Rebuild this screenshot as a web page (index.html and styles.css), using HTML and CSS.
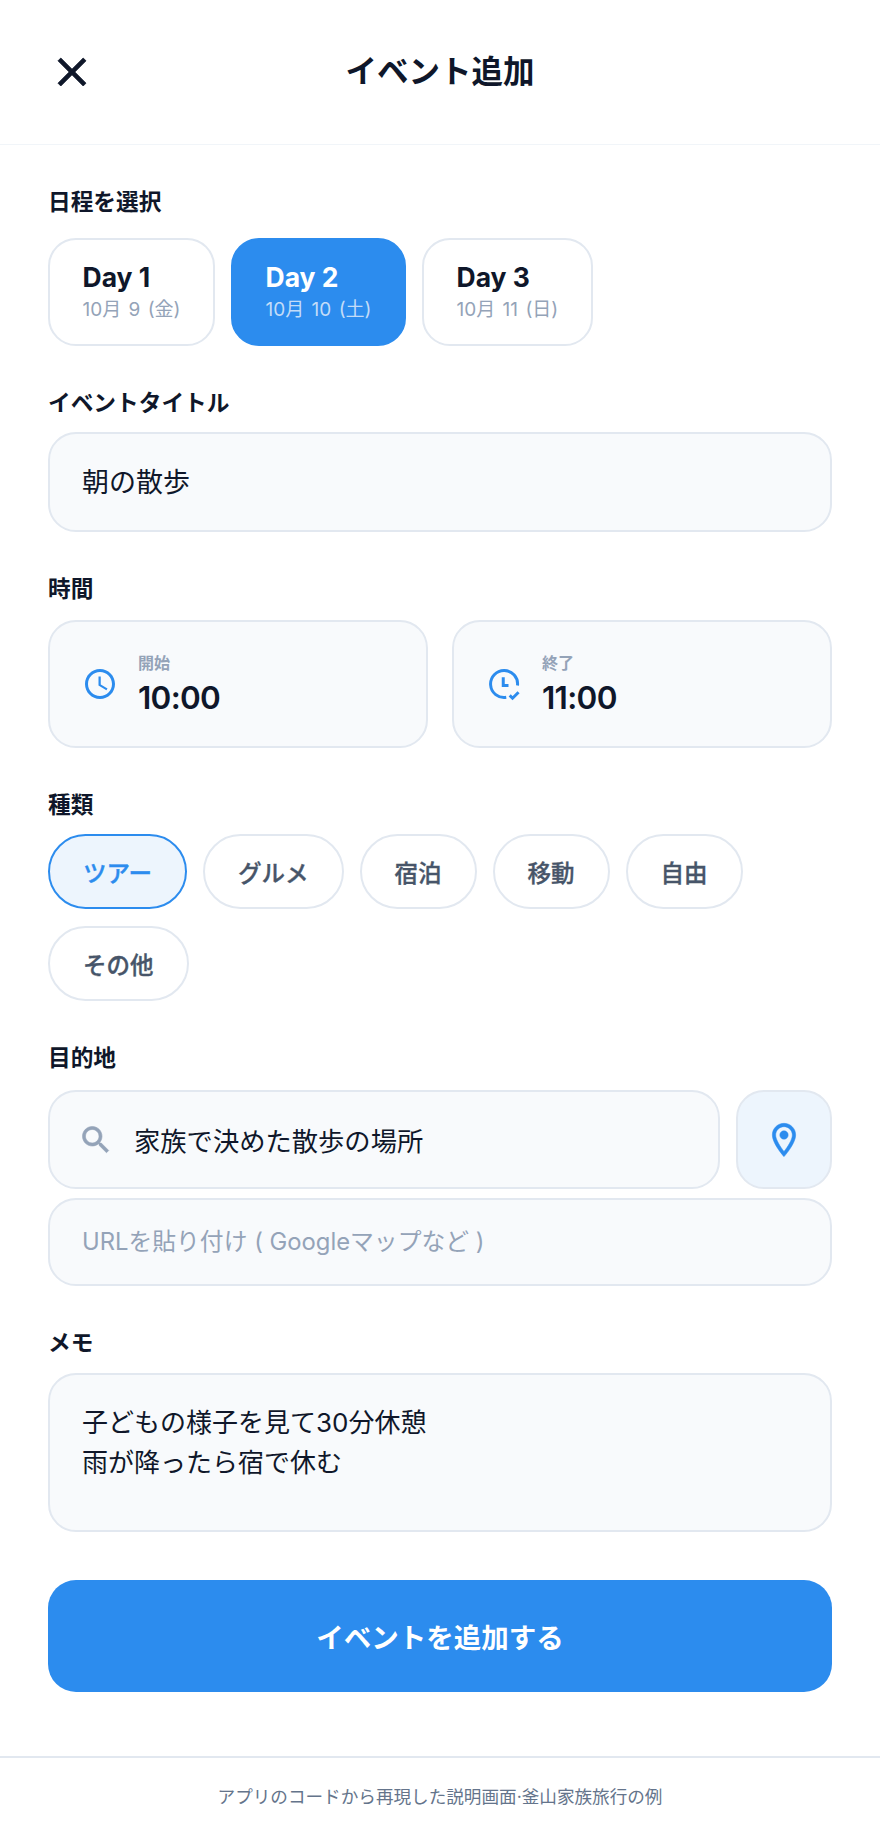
FILE: index.html
```html
<!DOCTYPE html>
<html lang="ja">
<head>
    <meta charset="UTF-8">
    <meta name="viewport" content="width=device-width, initial-scale=1.0">
    <title>イベント追加</title>
    <link rel="stylesheet" href="styles.css">
</head>
<body>
    <header class="top-bar">
        <button class="close-btn" aria-label="閉じる">
            <svg viewBox="0 0 24 24"><path d="M19 6.41 17.59 5 12 10.59 6.41 5 5 6.41 10.59 12 5 17.59 6.41 19 12 13.41 17.59 19 19 17.59 13.41 12z"/></svg>
        </button>
        <h1>イベント追加</h1>
    </header>

    <main class="form">
        <section class="field day-field">
            <div class="field-label">日程を選択</div>
            <div class="day-row">
                <button class="day-card">
                    <span class="day-name">Day 1</span>
                    <span class="day-date">10月 9 (金)</span>
                </button>
                <button class="day-card active">
                    <span class="day-name">Day 2</span>
                    <span class="day-date">10月 10 (土)</span>
                </button>
                <button class="day-card">
                    <span class="day-name">Day 3</span>
                    <span class="day-date">10月 11 (日)</span>
                </button>
            </div>
        </section>

        <section class="field title-field">
            <div class="field-label">イベントタイトル</div>
            <input class="text-input title-input" type="text" value="朝の散歩">
        </section>

        <section class="field time-field">
            <div class="field-label">時間</div>
            <div class="time-row">
                <div class="time-card">
                    <svg class="icon" viewBox="0 0 24 24"><path d="M11.99 2C6.47 2 2 6.48 2 12s4.47 10 9.99 10C17.52 22 22 17.52 22 12S17.52 2 11.99 2zM12 20c-4.42 0-8-3.58-8-8s3.58-8 8-8 8 3.58 8 8-3.58 8-8 8z"/><path d="M12.5 7H11v6l5.25 3.15.75-1.23-4.5-2.67z"/></svg>
                    <div>
                        <div class="time-label">開始</div>
                        <div class="time-value">10:00</div>
                    </div>
                </div>
                <div class="time-card">
                    <svg class="icon icon-line" viewBox="0 0 24 24"><path d="M21 13A9 9 0 1 0 13.5 20.9"/><path d="M11.5 7.5V13H15"/><path d="M15.8 19.6l1.9 1.9 4-4"/></svg>
                    <div>
                        <div class="time-label">終了</div>
                        <div class="time-value">11:00</div>
                    </div>
                </div>
            </div>
        </section>

        <section class="field type-field">
            <div class="field-label">種類</div>
            <div class="chip-row">
                <button class="chip active">ツアー</button>
                <button class="chip">グルメ</button>
                <button class="chip">宿泊</button>
                <button class="chip">移動</button>
                <button class="chip">自由</button>
                <button class="chip">その他</button>
            </div>
        </section>

        <section class="field place-field">
            <div class="field-label">目的地</div>
            <div class="place-row">
                <div class="search-box">
                    <svg class="icon icon-gray" viewBox="0 0 24 24"><path d="M15.5 14h-.79l-.28-.27C15.41 12.59 16 11.11 16 9.5 16 5.91 13.09 3 9.5 3S3 5.91 3 9.5 5.91 16 9.5 16c1.61 0 3.09-.59 4.23-1.57l.27.28v.79l5 4.99L20.49 19l-4.99-5zm-6 0C7.01 14 5 11.99 5 9.5S7.01 5 9.5 5 14 7.01 14 9.5 11.99 14 9.5 14z"/></svg>
                    <input type="text" value="家族で決めた散歩の場所">
                </div>
                <button class="pin-btn" aria-label="地図">
                    <svg class="icon icon-pin" viewBox="0 0 24 24"><path d="M12 2C8.13 2 5 5.13 5 9c0 5.25 7 13 7 13s7-7.75 7-13c0-3.87-3.13-7-7-7zm0 2c2.76 0 5 2.24 5 5 0 2.88-2.88 7.19-5 9.88C9.92 16.21 7 11.85 7 9c0-2.76 2.24-5 5-5z"/><circle cx="12" cy="9" r="2.5"/></svg>
                </button>
            </div>
            <input class="text-input url-input" type="text" placeholder="URLを貼り付け ( Googleマップなど )">
        </section>

        <section class="field">
            <div class="field-label">メモ</div>
            <textarea class="text-input memo-input">子どもの様子を見て30分休憩
雨が降ったら宿で休む</textarea>
        </section>

        <button class="submit-btn">イベントを追加する</button>
    </main>

    <footer class="note">アプリのコードから再現した説明画面·釜山家族旅行の例</footer>
</body>
</html>
```
FILE: styles.css
```css
* {
    box-sizing: border-box;
}
body {
    margin: 0;
    background-color: white;
    color: #0f172a;
    font-family: Inter, "Noto Sans CJK JP", sans-serif;
}
button, input, textarea {
    font-family: inherit;
    color: inherit;
}
.top-bar {
    display: flex;
    align-items: center;
    height: 145px;
    padding: 0 48px;
    border-bottom: 1px solid #f1f5f9;
}
.top-bar h1 {
    flex: 1;
    margin: 0 48px 6px 0;
    font-size: 31.5px;
    font-weight: 700;
    text-align: center;
}
.close-btn {
    width: 48px;
    height: 48px;
    padding: 0;
    border: none;
    background: none;
}
.close-btn svg {
    display: block;
    width: 48px;
    height: 48px;
    fill: #0f172a;
    stroke: #0f172a;
    stroke-width: 0.4;
}
.form {
    padding: 42px 48px 0;
}
.field {
    margin-bottom: 42px;
}
.field-label {
    height: 30px;
    margin-bottom: 15px;
    font-size: 22.7px;
    line-height: 30px;
    font-weight: 700;
}
.day-field .field-label {
    margin-bottom: 21px;
}
.title-field .field-label {
    margin-bottom: 14px;
}
.time-field .field-label {
    margin-bottom: 16px;
}
.type-field .field-label {
    margin-bottom: 14px;
}
.place-field .field-label {
    margin-bottom: 17px;
}
.icon {
    display: block;
    flex: none;
    width: 36px;
    height: 36px;
    fill: #2c8cee;
}
.icon-gray {
    fill: #94a3b8;
    stroke: #94a3b8;
    stroke-width: 0.4;
}
.icon-pin {
    width: 40px;
    height: 40px;
    stroke: #2c8cee;
    stroke-width: 0.3;
}
.icon-line {
    fill: none;
    stroke: #2c8cee;
    stroke-width: 2;
}
.day-row {
    display: flex;
    gap: 16px;
}
.day-card {
    display: flex;
    flex-direction: column;
    align-items: flex-start;
    justify-content: center;
    height: 108px;
    padding: 0 32.5px;
    border: 2px solid #e2e8f0;
    border-radius: 28px;
    background-color: white;
}
.day-card.active {
    border-color: #2c8cee;
    background-color: #2c8cee;
    color: white;
}
.day-name {
    font-size: 26.5px;
    line-height: 32px;
    font-weight: 700;
}
.day-date {
    margin-top: 3px;
    font-size: 19px;
    line-height: 28px;
    word-spacing: 2px;
    color: #94a3b8;
}
.day-card.active .day-date {
    color: #c3dcf8;
}
.text-input {
    display: block;
    width: 100%;
    padding: 0 32px;
    border: 2px solid #e2e8f0;
    border-radius: 28px;
    background-color: #f8fafc;
    font-size: 26px;
    outline: none;
}
.title-input {
    height: 100px;
    padding-bottom: 3px;
    font-size: 27px;
}
.time-row {
    display: flex;
    gap: 24px;
}
.time-card {
    flex: 1;
    display: flex;
    align-items: center;
    gap: 20px;
    height: 128px;
    padding: 0 32px;
    border: 2px solid #e2e8f0;
    border-radius: 28px;
    background-color: #f8fafc;
}
.time-label {
    font-size: 16px;
    line-height: 24px;
    font-weight: 700;
    color: #94a3b8;
}
.time-value {
    margin-top: 3px;
    font-size: 31.5px;
    line-height: 40px;
    font-weight: 600;
    letter-spacing: -0.7px;
}
.chip-row {
    display: flex;
    flex-wrap: wrap;
    gap: 17px 16px;
}
.chip {
    height: 75px;
    padding: 0 33px;
    border: 2px solid #e2e8f0;
    border-radius: 38px;
    background-color: white;
    font-size: 23.5px;
    font-weight: 500;
    -webkit-text-stroke: 0.35px currentColor;
    color: #475569;
}
.chip.active {
    border-color: #2c8cee;
    background-color: #edf5fd;
    color: #2c8cee;
}
.place-row {
    display: flex;
    gap: 16px;
    margin-bottom: 9px;
}
.search-box {
    flex: 1;
    display: flex;
    align-items: center;
    gap: 20px;
    height: 99px;
    padding: 0 28px;
    border: 2px solid #e2e8f0;
    border-radius: 28px;
    background-color: #f8fafc;
}
.search-box input {
    flex: 1;
    min-width: 0;
    padding: 0;
    border: none;
    background: none;
    font-size: 26.3px;
    outline: none;
}
.pin-btn {
    display: flex;
    align-items: center;
    justify-content: center;
    width: 96px;
    padding: 0;
    border: 2px solid #e2e8f0;
    border-radius: 28px;
    background-color: #edf5fd;
}
.url-input {
    height: 88px;
    padding-bottom: 2px;
    font-size: 23.8px;
}
.url-input::placeholder {
    color: #94a3b8;
}
.memo-input {
    height: 159px;
    padding-top: 28px;
    line-height: 40px;
    resize: none;
}
.submit-btn {
    display: block;
    width: 100%;
    height: 112px;
    margin-top: 48px;
    border: none;
    border-radius: 28px;
    background-color: #2c8cee;
    color: white;
    font-size: 27.5px;
    font-weight: 700;
}
.note {
    height: 82px;
    margin-top: 64px;
    border-top: 2px solid #e2e8f0;
    font-size: 17.6px;
    line-height: 78px;
    text-align: center;
    color: #64748b;
}
```
